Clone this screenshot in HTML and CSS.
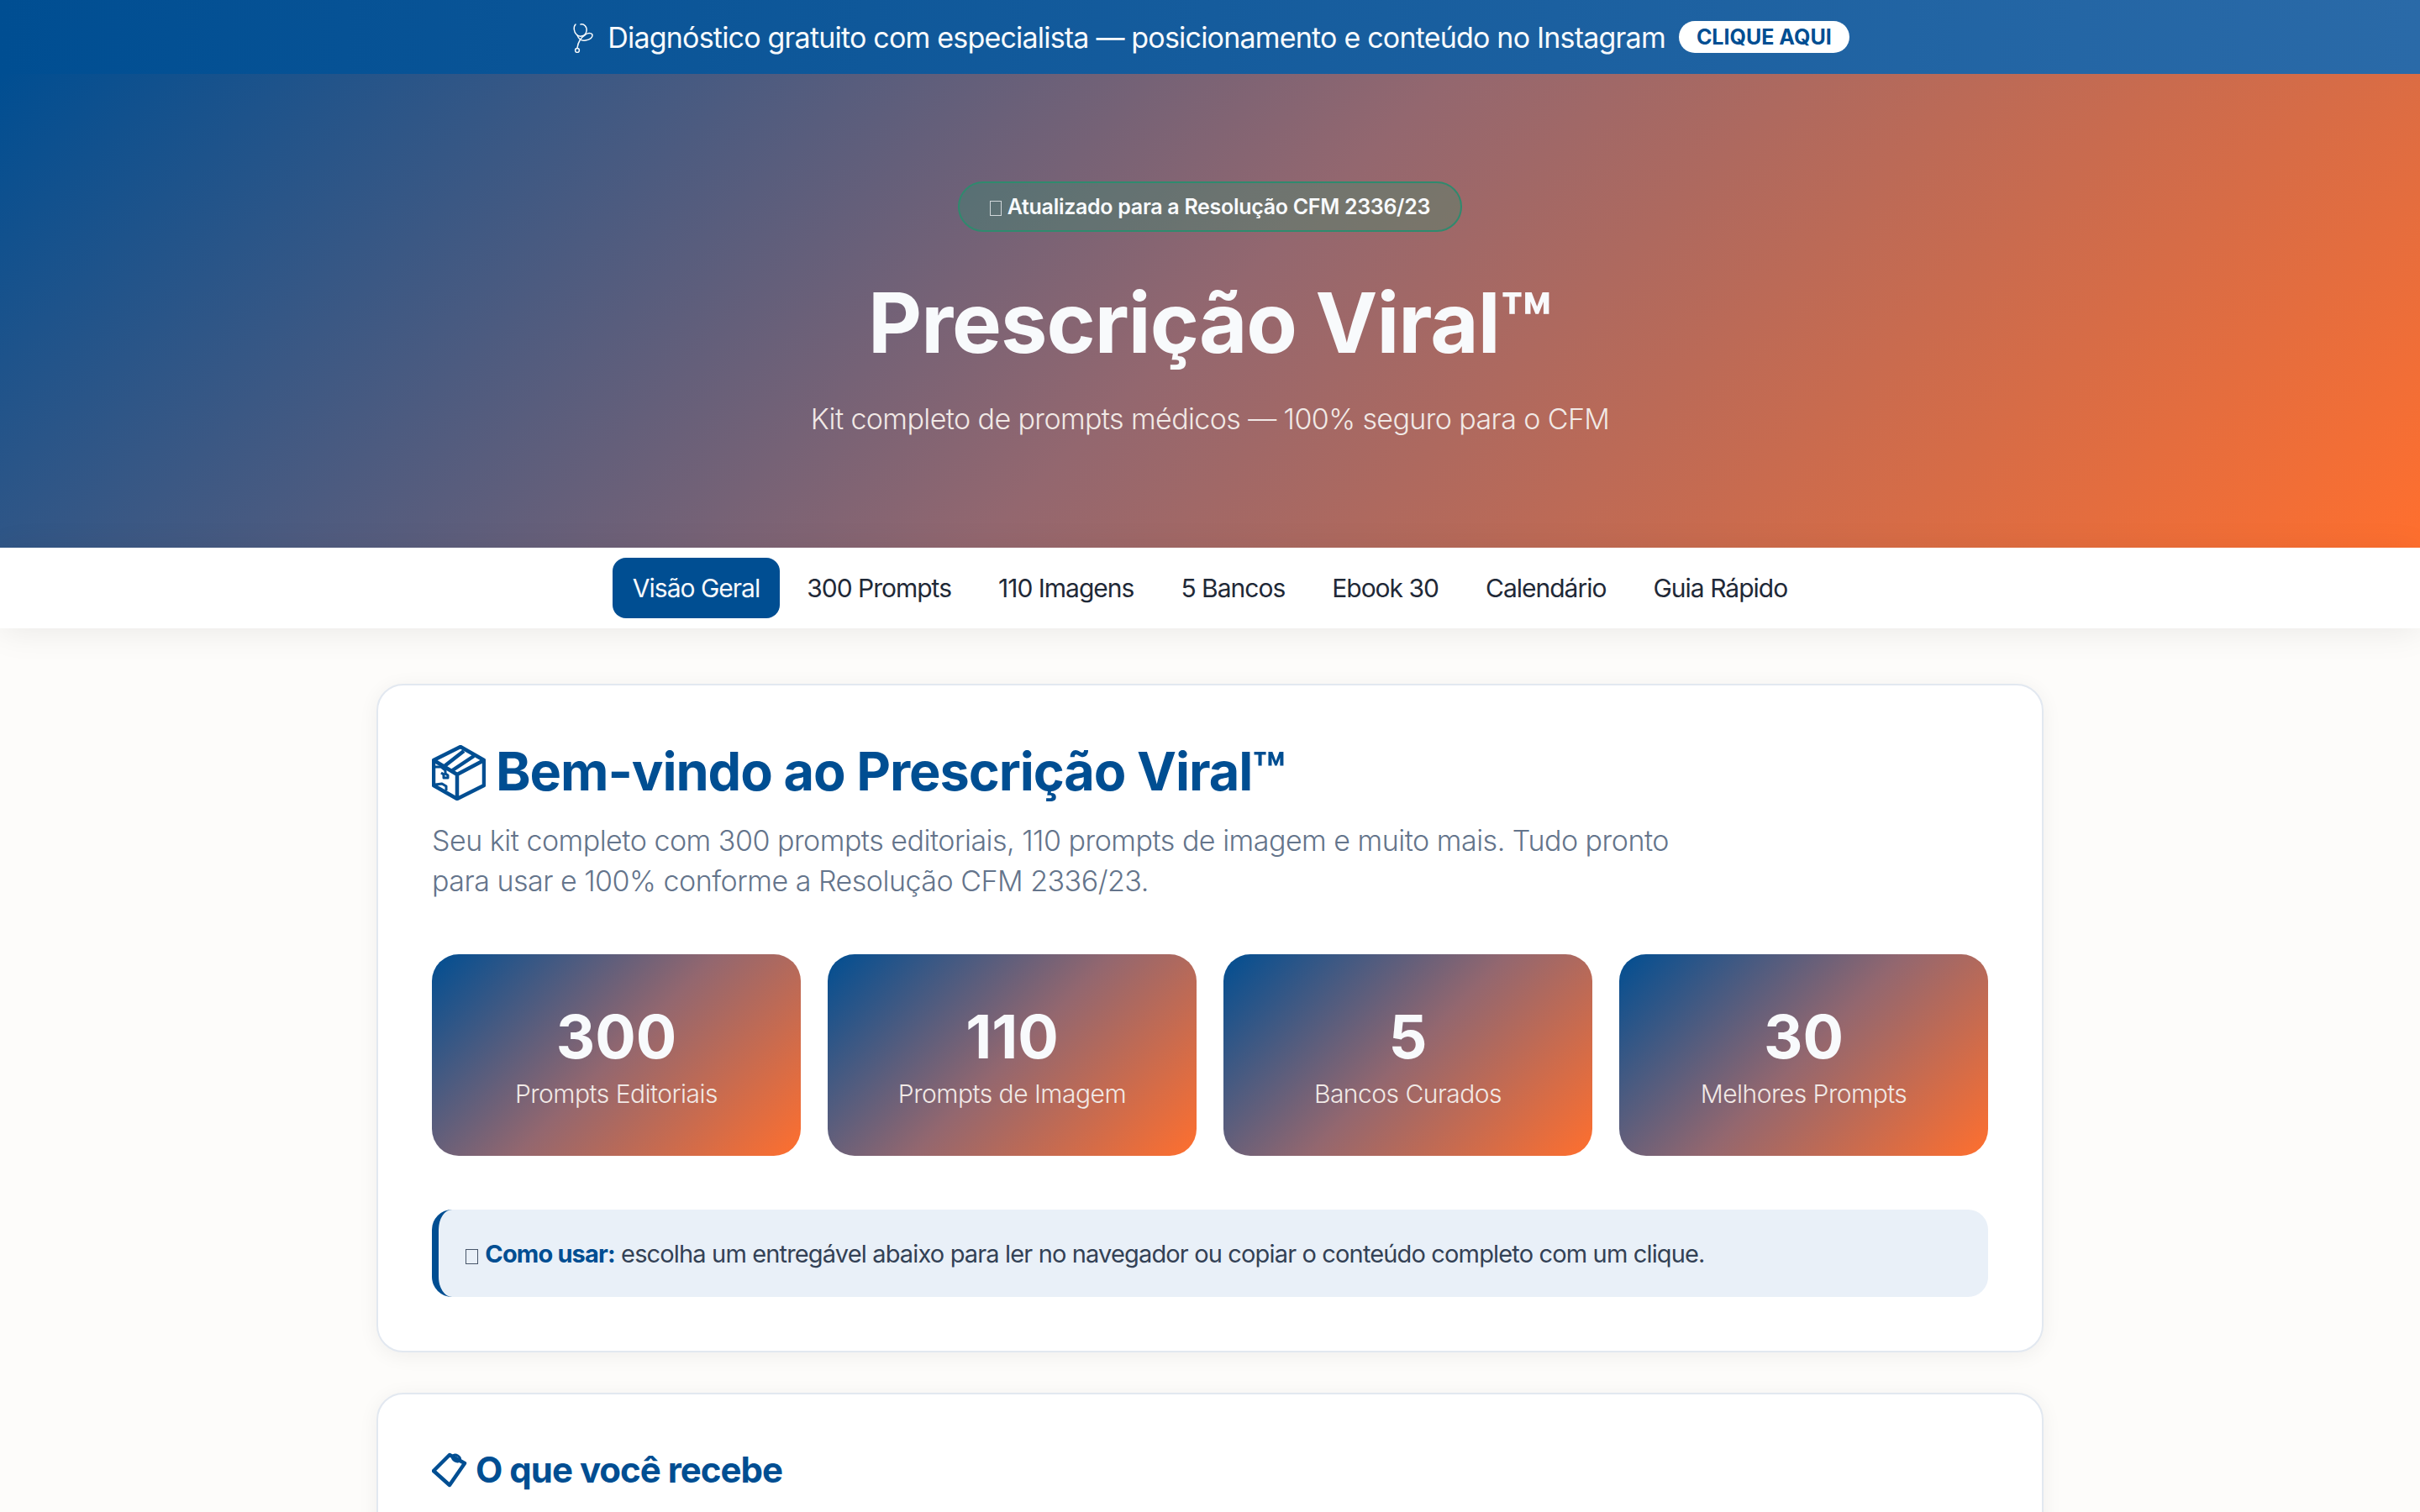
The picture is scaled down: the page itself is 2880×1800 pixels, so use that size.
FILE: index.html
```html
<!DOCTYPE html>
<html lang="pt-BR">
<head>
    <meta charset="UTF-8">
    <meta name="viewport" content="width=device-width, initial-scale=1.0">
    <title>Prescrição Viral™</title>
    <link rel="stylesheet" href="styles.css">
</head>
<body>
    <a class="topbar" href="#">
        <svg class="topbar-icon" viewBox="8 6 28 37" fill="none" stroke="#f8fafc" stroke-width="1.5" stroke-linecap="round">
            <path d="M14 9c-3 3-2 9 1 12 4 4 11 2 12-4 1-5-3-9-7-8"/>
            <path d="M16 22c2 5 6 7 10 6 5-1 8-3 8-6 0-3-5-3-8-1-5 3-9 9-10 16"/>
            <circle cx="16" cy="40" r="2.4"/>
        </svg>
        <span class="topbar-text">Diagnóstico gratuito com especialista — posicionamento e conteúdo no Instagram</span>
        <span class="topbar-cta">CLIQUE AQUI</span>
    </a>

    <header class="hero">
        <div class="hero-badge"><span class="tofu"></span> Atualizado para a Resolução CFM 2336/23</div>
        <h1>Prescrição Viral™</h1>
        <p>Kit completo de prompts médicos — 100% seguro para o CFM</p>
    </header>

    <nav class="tabs">
        <a class="tab active" href="#">Visão Geral</a>
        <a class="tab" href="#">300 Prompts</a>
        <a class="tab" href="#">110 Imagens</a>
        <a class="tab" href="#">5 Bancos</a>
        <a class="tab" href="#">Ebook 30</a>
        <a class="tab" href="#">Calendário</a>
        <a class="tab" href="#">Guia Rápido</a>
    </nav>

    <main class="container">
        <section class="card">
            <h2 class="title-lg">
                <svg class="icon-box" viewBox="5 7 64 66" fill="none" stroke="#004e92" stroke-width="4.5" stroke-linejoin="round">
                    <path d="M39 9 67 25V55L35 71 7 55V25Z"/>
                    <path d="M7 25 35 42 67 25M35 42V71"/>
                    <path d="M20 32 43 14M28 38 55 20"/>
                    <path d="M8 33h8l5 4v4l3 2v3h-5v-4l-3-2M9 54l8-1 5 3v5" stroke-width="3"/>
                </svg>
                Bem-vindo ao Prescrição Viral™
            </h2>
            <p class="lead">Seu kit completo com 300 prompts editoriais, 110 prompts de imagem e muito mais. Tudo pronto para usar e 100% conforme a Resolução CFM 2336/23.</p>

            <div class="stats">
                <div class="stat"><div class="stat-num">300</div><div class="stat-label">Prompts Editoriais</div></div>
                <div class="stat"><div class="stat-num">110</div><div class="stat-label">Prompts de Imagem</div></div>
                <div class="stat"><div class="stat-num">5</div><div class="stat-label">Bancos Curados</div></div>
                <div class="stat"><div class="stat-num">30</div><div class="stat-label">Melhores Prompts</div></div>
            </div>

            <div class="callout"><span class="tofu tofu-dark"></span> <strong>Como usar:</strong> escolha um entregável abaixo para ler no navegador ou copiar o conteúdo completo com um clique.</div>
        </section>

        <section class="card">
            <h2 class="title-md">
                <svg class="icon-tag" viewBox="8 8 42 42" fill="none" stroke="#004e92" stroke-width="4.5" stroke-linejoin="round">
                    <path d="M10 30 29 11 47 21 29 47Z"/>
                    <ellipse cx="37" cy="15" rx="5" ry="3.5" transform="rotate(30 37 15)" stroke-width="3"/>
                </svg>
                O que você recebe
            </h2>
        </section>
    </main>
</body>
</html>
```
FILE: styles.css
```css
/* base */
* {
    box-sizing: border-box;
}
body {
    margin: 0;
    font-family: "Inter", "Noto Sans", sans-serif;
    color: #1f2937;
    background-color: #fdfcfa;
}
a {
    text-decoration: none;
}
.tofu {
    display: inline-block;
    width: 14px;
    height: 18px;
    margin-right: 1px;
    vertical-align: -2px;
    border: 1.5px solid rgba(248, 250, 252, 0.75);
}
.tofu-dark {
    width: 15px;
    border-color: #475569;
}

/* topbar */
.topbar {
    display: flex;
    align-items: center;
    justify-content: center;
    gap: 16px;
    height: 88px;
    background: linear-gradient(90deg, #004e92, #2a6aa8);
    color: #f8fafc;
    font-size: 34px;
    letter-spacing: -0.8px;
}
.topbar-icon {
    width: 28px;
    height: 37px;
}
.topbar-cta {
    background-color: #fff;
    color: #004e92;
    font-size: 25px;
    font-weight: 700;
    letter-spacing: 0;
    padding: 4px 21px;
    border-radius: 20px;
}

/* hero */
.hero {
    height: 564px;
    padding-top: 128px;
    text-align: center;
    background: linear-gradient(135deg, #004e92, #93676f 50%, #ff6f2e);
    color: #f8fafc;
}
.hero-badge {
    display: inline-block;
    height: 60px;
    line-height: 56px;
    padding: 0 36px;
    border: 2px solid #2f8a6e;
    border-radius: 30px;
    background-color: rgba(40, 150, 110, 0.3);
    font-size: 25px;
    font-weight: 600;
    letter-spacing: -0.3px;
}
.hero h1 {
    margin: 48px 0 0;
    font-size: 99px;
    font-weight: 700;
    line-height: 120px;
    letter-spacing: -1px;
}
.hero p {
    margin: 34px 0 0;
    font-size: 34px;
    font-weight: 300;
    letter-spacing: -0.6px;
    color: #f1e9e6;
}

/* tabs */
.tabs {
    display: flex;
    justify-content: center;
    align-items: center;
    gap: 8px;
    height: 96px;
    background-color: #fff;
    box-shadow: 0 4px 40px rgba(0, 0, 0, 0.08);
}
.tab {
    display: block;
    padding: 0 24px;
    line-height: 72px;
    border-radius: 16px;
    font-size: 30px;
    letter-spacing: -1px;
    color: #1f2937;
}
.tab.active {
    background-color: #004e92;
    color: #f8fafc;
}

/* content */
.container {
    width: 1984px;
    margin: 66px auto 0;
}
.card {
    padding: 64px;
    margin-bottom: 48px;
    background-color: #fff;
    border: 2px solid #e2e8f0;
    border-radius: 32px;
    box-shadow: 0 4px 24px rgba(0, 0, 0, 0.06);
}
.title-lg {
    display: flex;
    align-items: center;
    gap: 12px;
    margin: 0;
    font-size: 63px;
    font-weight: 700;
    line-height: 76px;
    letter-spacing: -1.1px;
    color: #004e92;
}
.icon-box {
    width: 64px;
    height: 66px;
    margin-top: 4px;
}
.title-md {
    display: flex;
    align-items: center;
    gap: 10px;
    margin: 0;
    font-size: 42px;
    font-weight: 700;
    letter-spacing: -1px;
    color: #004e92;
}
.icon-tag {
    width: 42px;
    height: 42px;
}
.lead {
    margin: 21px 0 0;
    max-width: 1500px;
    font-size: 34px;
    font-weight: 300;
    line-height: 48px;
    letter-spacing: -0.5px;
    color: #64748b;
}

/* stats */
.stats {
    display: grid;
    grid-template-columns: repeat(4, 1fr);
    gap: 32px;
    margin-top: 63px;
}
.stat {
    height: 240px;
    padding-top: 52px;
    text-align: center;
    border-radius: 32px;
    background: linear-gradient(135deg, #004e92, #93676f 50%, #ff6f2e);
    color: #f8fafc;
}
.stat-num {
    font-size: 72px;
    font-weight: 700;
    line-height: 92px;
}
.stat-label {
    margin-top: 4px;
    font-size: 30px;
    font-weight: 300;
    letter-spacing: -0.5px;
    color: #f1e9e6;
}

/* callout */
.callout {
    display: block;
    height: 104px;
    margin-top: 64px;
    padding: 0 32px;
    line-height: 106px;
    border-left: 8px solid #004e92;
    border-radius: 24px;
    background-color: #e9f0f8;
    font-size: 29px;
    letter-spacing: -0.85px;
    color: #334155;
}
.callout strong {
    color: #004e92;
}
```
